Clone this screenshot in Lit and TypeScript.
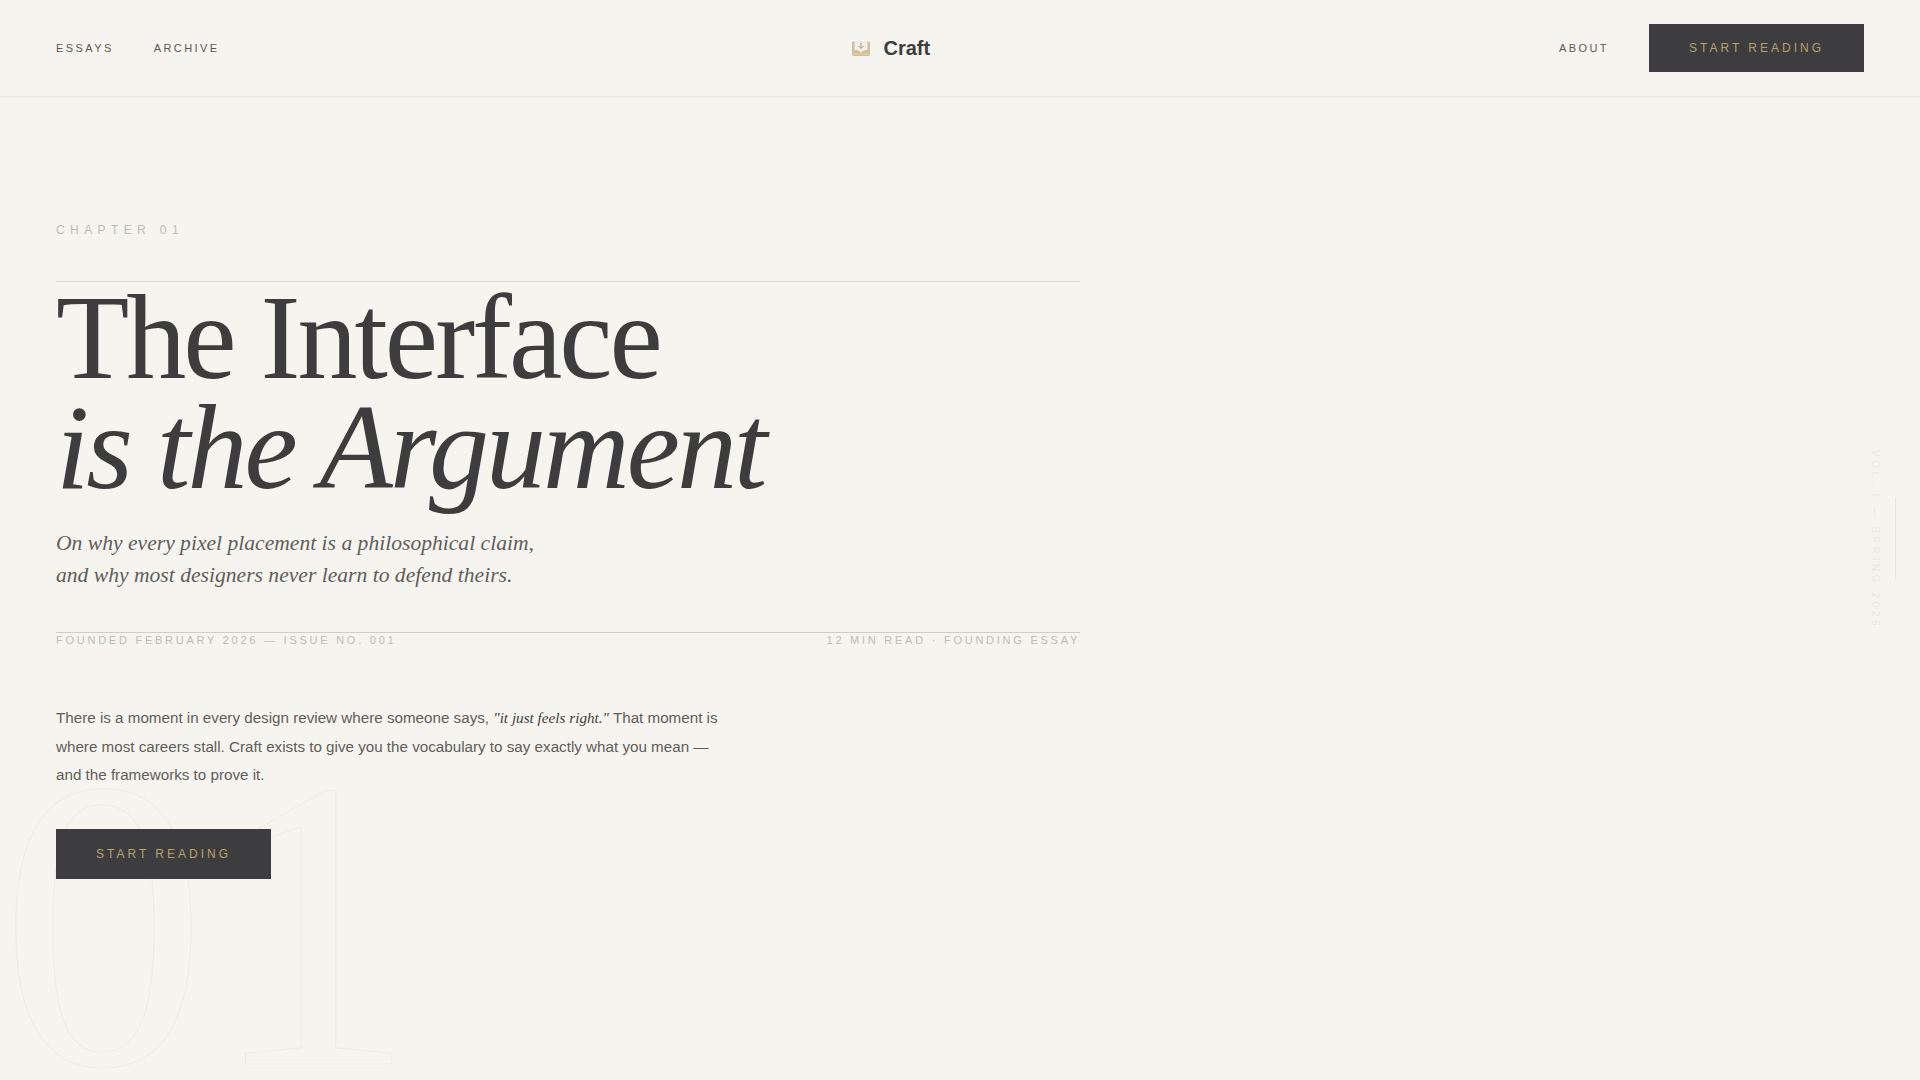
import { LitElement, html, css } from "lit";
import { customElement } from "lit/decorators.js";

@customElement("app-root")
export class AppRoot extends LitElement {
  static styles = css`
    :host { display: block; width: 100%; height: 1080px; overflow: hidden; position: relative; background: #f6f4ef; font-family: "Liberation Sans", Arial, sans-serif; color: #3d3d3d; }
    header { height: 96px; border-bottom: 1px solid #ebe8e3; display: flex; justify-content: space-between; align-items: center; padding: 0 56px; }
    .left, .right { display: flex; align-items: center; gap: 40px; }
    .link { font-size: 11px; letter-spacing: 0.22em; color: #5a5a55; }
    .logo { display: flex; align-items: center; gap: 12px; font-size: 20px; font-weight: 700; color: #3d3d3d; margin-left: 3px; }
    .logo svg { width: 20px; height: 20px; display: block; }
    .btn { background: #3d3d3f; color: #b8a06a; font-size: 12px; letter-spacing: 0.25em; display: flex; align-items: center; justify-content: center; width: 215px; height: 48px; }
    .btn.big { height: 50px; }
    main { padding: 125px 56px 0; position: relative; z-index: 1; }
    .chapter { font-size: 12px; letter-spacing: 0.45em; color: #bdbbb6; line-height: 16px; }
    .rule-h { margin-top: 43px; width: 1024px; border-top: 1px solid #d9d6cf; }
    h1 { margin: 1px 0 0; font-family: "Liberation Serif", "Times New Roman", serif; font-weight: 400; font-size: 120px; line-height: 110.4px; letter-spacing: -0.025em; color: #3d3d3d; }
    h1 em { display: block; }
    .sub { margin: 23px 0 0; font-family: "Liberation Serif", serif; font-style: italic; font-size: 21.6px; line-height: 32.4px; color: #5e5e5a; }
    .meta { margin-top: 40px; width: 1024px; border-top: 1px solid #d0cdc6; display: flex; justify-content: space-between; font-size: 11px; letter-spacing: 0.25em; color: #bdbbb6; line-height: 13px; padding-top: 1px; }
    .body { margin: 57px 0 0; width: 670px; font-size: 15.2px; line-height: 28.88px; color: #5e5e5a; }
    .body em { font-family: "Liberation Serif", serif; color: #3d3d3d; }
    .cta { margin-top: 39px; }
    .ghost { position: absolute; left: 0; bottom: -52px; font-family: "Liberation Serif", serif; font-size: 414px; line-height: 1; letter-spacing: 0.005em; color: transparent; -webkit-text-stroke: 1px #ecebe5; z-index: 0; }
    .side { position: absolute; left: 1870px; top: 450px; writing-mode: vertical-rl; font-size: 10px; letter-spacing: 0.36em; color: #ebe8e2; }
    .vline { position: absolute; left: 1895px; top: 498px; width: 1px; height: 82px; background: #e8e5de; }
  `;
  render() {
    return html`
      <header>
        <div class="left"><span class="link">ESSAYS</span><span class="link">ARCHIVE</span></div>
        <div class="logo">
          <svg viewBox="0 0 20 20">
            <path d="M1 5 q0-1.500 1.500-1.500 h15 q1.500 0 1.500 1.500 v11 q0 2-2 2 h-14 q-2 0-2-2z" fill="#cfc097" />
            <path d="M3.500 2.500 c2.500 0 5 .5 6.500 2 c1.500-1.500 4-2 6.500-2 v9.500 c-2.500 0-5 .5-6.500 2.500 c-1.500-2-4-2.500-6.500-2.500z" fill="#f0eee8" />
            <path d="M10 5 v5 M7.500 8 l2.500 2.500 l2.500-2.500" fill="none" stroke="#a89e86" stroke-width="1" />
            <path d="M3 16 h14" stroke="#e0d7bc" stroke-width="1" />
          </svg>
          Craft
        </div>
        <div class="right"><span class="link">ABOUT</span><div class="btn">START READING</div></div>
      </header>
      <div class="ghost">01</div>
      <div class="side">VOL. I — SPRING 2026</div>
      <div class="vline"></div>
      <main>
        <div class="chapter">CHAPTER 01</div>
        <div class="rule-h"></div>
        <h1>The Interface<em>is the Argument</em></h1>
        <p class="sub">On why every pixel placement is a philosophical claim,<br />and why most designers never learn to defend theirs.</p>
        <div class="meta"><span>FOUNDED FEBRUARY 2026 — ISSUE NO. 001</span><span>12 MIN READ · FOUNDING ESSAY</span></div>
        <p class="body">There is a moment in every design review where someone says, <em>"it just feels right."</em> That moment is where most careers stall. Craft exists to give you the vocabulary to say exactly what you mean — and the frameworks to prove it.</p>
        <div class="btn big cta">START READING</div>
      </main>
    `;
  }
}
